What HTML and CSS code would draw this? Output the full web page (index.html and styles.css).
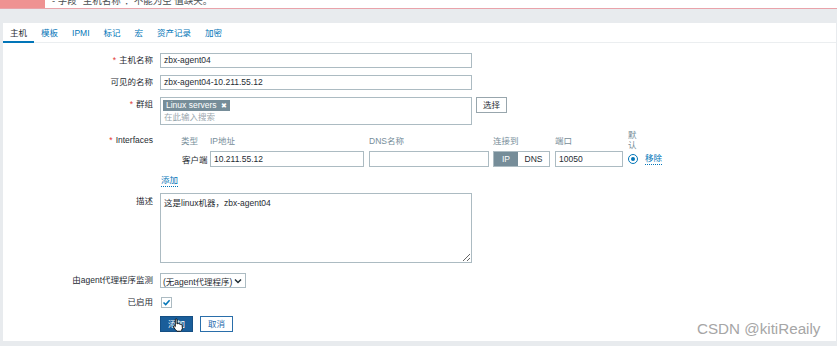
FILE: index.html
```html
<!DOCTYPE html>
<html lang="zh">
<head>
<meta charset="utf-8">
<title>主机</title>
<link rel="stylesheet" href="styles.css">
</head>
<body>
<div class="msg">
  <div class="msg-icon"></div>
  <div class="msg-text">- 字段 "主机名称"：不能为空 值缺失。</div>
</div>
<div class="panel">
  <ul class="tabs">
    <li class="tab active">主机</li>
    <li class="tab">模板</li>
    <li class="tab">IPMI</li>
    <li class="tab">标记</li>
    <li class="tab">宏</li>
    <li class="tab">资产记录</li>
    <li class="tab">加密</li>
  </ul>
  <div class="form">
    <div class="row r-name">
      <div class="lbl req">主机名称</div>
      <div class="inp w-full">zbx-agent04</div>
    </div>
    <div class="row r-name">
      <div class="lbl">可见的名称</div>
      <div class="inp w-full">zbx-agent04-10.211.55.12</div>
    </div>
    <div class="row r-group">
      <div class="lbl req">群组</div>
      <div class="ms">
        <span class="chip">Linux servers <span class="chip-x">✖</span></span>
        <div class="ms-ph">在此输入搜索</div>
      </div>
      <div class="btn-alt">选择</div>
    </div>
    <div class="row r-if">
      <div class="lbl lbl-if req">Interfaces</div>
      <div class="iftable">
        <div class="ifh">类型</div>
        <div class="ifh">IP地址</div>
        <div class="ifh">DNS名称</div>
        <div class="ifh">连接到</div>
        <div class="ifh">端口</div>
        <div class="ifh ifh-def">默认</div>
        <div></div>
        <div class="iftype">客户端</div>
        <div class="inp w-ip">10.211.55.12</div>
        <div class="inp w-dns"></div>
        <div class="seg"><span class="seg-on">IP</span><span class="seg-off">DNS</span></div>
        <div class="inp w-port">10050</div>
        <div class="radio"><span class="dot"></span></div>
        <div class="link">移除</div>
      </div>
    </div>
    <div class="row r-add">
      <div class="lbl"></div>
      <div class="link">添加</div>
    </div>
    <div class="row r-desc">
      <div class="lbl lbl-desc">描述</div>
      <textarea class="ta">这是linux机器，zbx-agent04</textarea>
    </div>
    <div class="row r-proxy">
      <div class="lbl">由agent代理程序监测</div>
      <div class="select">(无agent代理程序)
        <svg class="chev" width="8" height="6" viewBox="0 0 8 6"><path d="M1 1.5 L4 4.5 L7 1.5" fill="none" stroke="#1f2c33" stroke-width="1.5"/></svg>
      </div>
    </div>
    <div class="row r-en">
      <div class="lbl lbl-en">已启用</div>
      <div class="cb">
        <svg width="9" height="9" viewBox="0 0 9 9"><path d="M1.5 4.5 L3.7 6.6 L7.6 2.2" fill="none" stroke="#0275b8" stroke-width="1.5"/></svg>
      </div>
    </div>
    <div class="row r-btn">
      <div class="lbl"></div>
      <div class="btns">
        <div class="btn-main">添加</div>
        <div class="btn-sec">取消</div>
      </div>
    </div>
  </div>
</div>
<svg class="cursor" width="12" height="14" viewBox="0 0 11 13"><path d="M3 1.2 Q3.9 0.6 4.6 1.2 L4.6 5.6 L5.2 5.2 Q6 4.9 6.5 5.6 Q7.3 5.2 7.9 6 Q8.8 5.8 9.3 6.6 L9.6 9.5 Q9.3 11.5 7.8 12.3 L4.6 12.3 Q3 11 1.4 8.4 Q1 7.3 2.1 7.2 L3 8 Z" fill="#fff" stroke="#111" stroke-width="0.9"/></svg>
<div class="watermark">CSDN @kitiReaily</div>
</body>
</html>
```

FILE: styles.css
```css
* { box-sizing: border-box; }
html, body { margin: 0; padding: 0; }
body {
  width: 837px;
  height: 346px;
  overflow: hidden;
  position: relative;
  background: #e8ebee;
  font-family: "Liberation Sans", Arial, "Noto Sans CJK SC", sans-serif;
  font-size: 8.5px;
  color: #1f2c33;
}
.msg {
  height: 9px;
  display: flex;
  background: #fff;
  border-bottom: 1px solid #e9a3aa;
  overflow: hidden;
}
.msg-icon { width: 45px; background: #ef9292; }
.msg-text {
  margin-left: 7px;
  margin-top: -5px;
  line-height: 12px;
  font-size: 9.5px;
  color: #4a4f52;
  white-space: nowrap;
}
.panel {
  margin: 14px 1px 0 3px;
  height: 318px;
  background: #fff;
}
.tabs {
  display: flex;
  margin: 0;
  padding: 0;
  list-style: none;
  height: 20px;
  border-bottom: 1px solid #ebeef0;
}
.tab {
  height: 20px;
  padding: 2px 7px 0;
  line-height: 16px;
  color: #0275b8;
  border-bottom: 2px solid transparent;
}
.tab.active {
  color: #1f2c33;
  border-bottom-color: #0275b8;
}
.form { padding-top: 10px; }
.row { display: flex; gap: 7px; align-items: flex-start; }
.lbl {
  width: 150px;
  flex: none;
  text-align: right;
  line-height: 15px;
  white-space: nowrap;
}
.req::before { content: "*"; color: #e33734; margin-right: 3px; }
.r-name { margin-bottom: 7px; }
.r-group { margin-bottom: 5px; }
.r-if { margin-bottom: 7px; }
.r-add { margin-bottom: 6px; }
.r-desc { margin-bottom: 10px; }
.r-proxy { margin-bottom: 8px; }
.r-en { margin-bottom: 8px; }
.inp {
  height: 15px;
  border: 1px solid #acbbc2;
  background: #fff;
  padding: 0 3px;
  line-height: 13px;
  white-space: nowrap;
  overflow: hidden;
}
.w-full { width: 312px; }
.ms {
  width: 312px;
  height: 28px;
  border: 1px solid #acbbc2;
  padding: 2px;
}
.chip {
  display: inline-flex;
  align-items: center;
  gap: 4px;
  height: 11px;
  padding: 0 3px;
  background: #768d99;
  color: #fff;
  line-height: 11px;
}
.chip-x { font-size: 7px; }
.ms-ph { line-height: 13px; color: #9aa7ae; padding-left: 1px; }
.btn-alt {
  margin-left: -3px;
  width: 31px;
  height: 16px;
  border: 1px solid #98a6ad;
  text-align: center;
  line-height: 14px;
}
.lbl-if { line-height: 20px; }
.iftable {
  margin-left: 21px;
  display: grid;
  grid-template-columns: 29px 159px 124px 62px 73px 17px auto;
  grid-template-rows: 20px 16px;
  row-gap: 1px;
  align-items: center;
}
.ifh { color: #768d99; white-space: nowrap; }
.ifh-def { white-space: normal; width: 10px; line-height: 10px; }
.iftype { padding-left: 1px; }
.w-ip { width: 154px; height: 16px; line-height: 14px; }
.w-dns { width: 120px; height: 16px; }
.w-port { width: 68px; height: 16px; line-height: 14px; }
.seg {
  display: flex;
  width: 57px;
  height: 16px;
  border: 1px solid #acbbc2;
  line-height: 14px;
  text-align: center;
}
.seg-on { width: 24px; background: #768d99; color: #fff; }
.seg-off { flex: 1; }
.radio {
  width: 10px;
  height: 10px;
  border: 1px solid #0275b8;
  border-radius: 50%;
  display: flex;
  align-items: center;
  justify-content: center;
}
.dot { width: 4px; height: 4px; border-radius: 50%; background: #0275b8; }
.link {
  color: #0275b8;
  line-height: 11px;
  border-bottom: 1px dotted #0275b8;
  justify-self: start;
}
.r-add .link { margin-left: 1px; margin-top: 1px; }
.lbl-desc { line-height: 16px; }
.ta {
  display: block;
  width: 312px;
  height: 70px;
  margin: 0;
  border: 1px solid #acbbc2;
  padding: 3px 3px;
  font: inherit;
  line-height: 13px;
  color: #1f2c33;
  resize: both;
}
.select {
  width: 86px;
  height: 15px;
  border: 1px solid #acbbc2;
  padding: 0 3px 0 2px;
  display: flex;
  align-items: center;
  justify-content: space-between;
  white-space: nowrap;
}
.lbl-en { line-height: 12px; }
.cb {
  margin-left: 1px;
  margin-top: 1px;
  width: 11px;
  height: 11px;
  border: 1px solid #acbbc2;
  display: flex;
  align-items: center;
  justify-content: center;
}
.btns { display: flex; gap: 7px; }
.btn-main, .btn-sec {
  width: 33px;
  height: 16px;
  text-align: center;
  line-height: 14px;
}
.btn-main { background: #1a5e9a; border: 1px solid #154f84; color: #fff; }
.btn-sec { background: #fff; border: 1px solid #2a6eaa; color: #1f6bad; }
.cursor { position: absolute; left: 172px; top: 318px; }
.watermark {
  position: absolute;
  left: 697px;
  top: 320px;
  font-size: 15.2px;
  color: #a6a6a6;
  white-space: nowrap;
}
```
